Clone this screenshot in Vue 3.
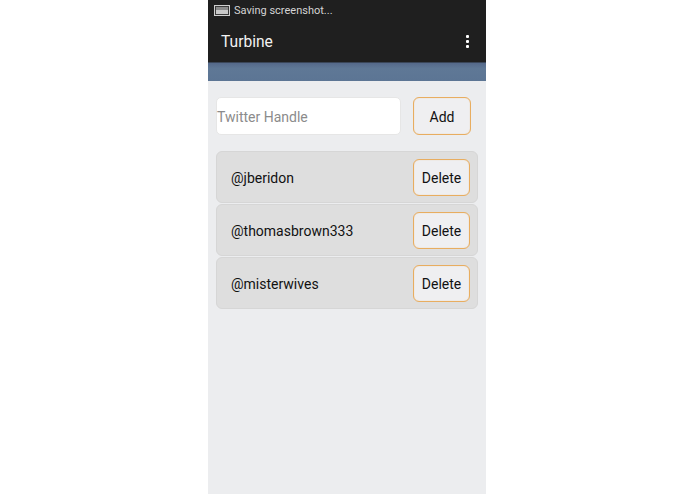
<script setup>
const handles = ['@jberidon', '@thomasbrown333', '@misterwives']
</script>

<template>
  <div class="page">
    <div class="phone">
      <div class="status">
        <svg class="status-icon" width="16" height="11" viewBox="0 0 16 11">
          <rect x="0.5" y="0.5" width="15" height="10" fill="#3a3a3a" stroke="#cfcfcf" />
          <rect x="2" y="2" width="12" height="3" fill="#8a8a8a" />
          <rect x="2" y="5" width="12" height="4" fill="#c9c9c9" />
        </svg>
        <span>Saving screenshot...</span>
      </div>
      <div class="action-bar">
        <span class="title">Turbine</span>
        <div class="overflow">
          <i></i><i></i><i></i>
        </div>
      </div>
      <div class="band"></div>
      <div class="content">
        <div class="add-row">
          <div class="input">Twitter Handle</div>
          <div class="btn add">Add</div>
        </div>
        <div class="list">
          <div v-for="h in handles" :key="h" class="item">
            <span class="handle">{{ h }}</span>
            <div class="btn">Delete</div>
          </div>
        </div>
      </div>
    </div>
  </div>
</template>

<style>
html,
body {
  background: #fff;
}
</style>

<style scoped>
.page {
  width: 695px;
  height: 494px;
  overflow: hidden;
  display: flex;
  justify-content: center;
  font-family: Roboto, "Liberation Sans", sans-serif;
}

.phone {
  width: 278px;
  margin-left: -1px;
  height: 494px;
  display: flex;
  flex-direction: column;
  background: #ecedef;
}

.status {
  height: 20px;
  flex: none;
  background: #1f1f1f;
  color: #d4d4d4;
  font-size: 11px;
  display: flex;
  align-items: center;
  gap: 4px;
  padding-left: 6px;
}

.action-bar {
  height: 43px;
  flex: none;
  box-sizing: border-box;
  background: #1f1f1f;
  border-bottom: 1px solid #3a4658;
  color: #f2f2f2;
  display: flex;
  align-items: center;
  justify-content: space-between;
  padding: 1px 17px 0 13px;
}

.title {
  font-size: 15.6px;
  padding-top: 1px;
}

.overflow {
  display: flex;
  flex-direction: column;
  gap: 2px;
}

.overflow i {
  width: 3px;
  height: 3px;
  border-radius: 1px;
  background: #fff;
}

.band {
  height: 18px;
  flex: none;
  background: linear-gradient(#55698a, #5f7896 30%, #5c7594);
}

.content {
  padding: 16px 8px 0;
}

.add-row {
  display: flex;
  align-items: center;
  justify-content: space-between;
  padding-right: 7px;
  margin-bottom: 16px;
}

.input {
  width: 185px;
  height: 38px;
  box-sizing: border-box;
  background: #fff;
  border: 1px solid #e6e6e6;
  border-radius: 5px;
  color: #8b8b8b;
  font-size: 14px;
  line-height: 38px;
}

.btn {
  width: 57px;
  height: 37px;
  padding-top: 1px;
  box-sizing: border-box;
  border: 1px solid #e8ad60;
  border-radius: 6px;
  box-shadow: inset 0 0 1px #ecbf85;
  background: #efeff1;
  color: #111;
  font-size: 14px;
  display: flex;
  align-items: center;
  justify-content: center;
}

.btn.add {
  width: 58px;
  height: 38px;
}

.list {
  display: flex;
  flex-direction: column;
  gap: 1px;
}

.item {
  height: 52px;
  box-sizing: border-box;
  background: #dedede;
  border: 1px solid #d6d6d6;
  border-radius: 6px;
  display: flex;
  align-items: center;
  justify-content: space-between;
  padding-left: 14px;
  padding-right: 7px;
}

.handle {
  font-size: 14px;
  color: #111;
  padding-top: 1px;
}
</style>
